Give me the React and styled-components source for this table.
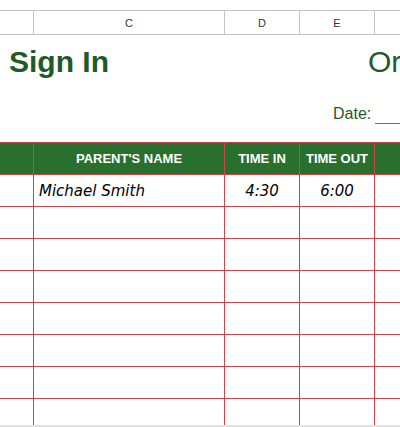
import React from "react";
import styled, { createGlobalStyle } from "styled-components";

const GlobalStyle = createGlobalStyle`
  html, body {
    margin: 0;
    padding: 0;
    background: #fff;
    overflow: hidden;
  }
  * {
    box-sizing: border-box;
  }
`;

const COLS = "33px 191px 75px 75px 1fr";
const GRID_GRAY = "#c4c4c4";
const RED = "#c9474c";
const GREEN = "#29702f";
const INK = "#1f5a2b";

const rows = [
  { name: "Michael Smith", timeIn: "4:30", timeOut: "6:00" },
  {},
  {},
  {},
  {},
  {},
  {},
  {},
];

const App = () => {
  return (
    <Sheet>
      <GlobalStyle />
      <ColumnBar>
        <ColLetter />
        <ColLetter>C</ColLetter>
        <ColLetter>D</ColLetter>
        <ColLetter>E</ColLetter>
        <ColLetter />
      </ColumnBar>

      <TitleBlock>
        <TitleRow>
          <Title bold>Sign In</Title>
          <Title>Or</Title>
        </TitleRow>
        <DateRow>
          <DateLabel>Date:</DateLabel>
          <DateBlank />
        </DateRow>
      </TitleBlock>

      <Table>
        <HeadRow>
          <HeadCell />
          <HeadCell>PARENT'S NAME</HeadCell>
          <HeadCell>TIME IN</HeadCell>
          <HeadCell>TIME OUT</HeadCell>
          <HeadCell />
        </HeadRow>
        {rows.map((r, i) => (
          <Row key={i}>
            <Cell />
            <Cell align="left">{r.name}</Cell>
            <Cell>{r.timeIn}</Cell>
            <Cell>{r.timeOut}</Cell>
            <Cell />
          </Row>
        ))}
      </Table>
      <ScrollEdge />
    </Sheet>
  );
};

const Sheet = styled.div`
  width: 400px;
  height: 427px;
  display: flex;
  flex-direction: column;
  overflow: hidden;
  font-family: "Liberation Sans", Arial, sans-serif;
`;

const ColumnBar = styled.div`
  margin-top: 10px;
  height: 25px;
  flex-shrink: 0;
  display: grid;
  grid-template-columns: ${COLS};
  border-top: 1px solid ${GRID_GRAY};
  border-bottom: 1px solid ${GRID_GRAY};
`;

const ColLetter = styled.div`
  display: flex;
  align-items: center;
  justify-content: center;
  font-size: 11px;
  color: #333;
  & + & {
    border-left: 1px solid ${GRID_GRAY};
  }
`;

const TitleBlock = styled.div`
  height: 107px;
  flex-shrink: 0;
  display: flex;
  flex-direction: column;
`;

const TitleRow = styled.div`
  display: grid;
  grid-template-columns: 368px max-content;
  padding-top: 10px;
  white-space: nowrap;
`;

const Title = styled.div`
  font-size: 30px;
  line-height: 34px;
  color: ${INK};
  font-weight: ${(p) => (p.bold ? 700 : 400)};
  padding-left: ${(p) => (p.bold ? "9px" : "0")};
`;

const DateRow = styled.div`
  margin-top: 25px;
  padding-left: 333px;
  display: flex;
  align-items: flex-end;
  gap: 4px;
`;

const DateLabel = styled.span`
  font-size: 16px;
  line-height: 19px;
  color: ${INK};
`;

const DateBlank = styled.span`
  flex: 1;
  height: 19px;
  margin-bottom: -1px;
  border-bottom: 1px solid ${RED};
`;

const Table = styled.div`
  flex: 1;
  overflow: hidden;
  border-top: 1px solid ${RED};
`;

const Row = styled.div`
  height: 32px;
  display: grid;
  grid-template-columns: ${COLS};
  border-bottom: 1px solid ${RED};
`;

const HeadRow = styled(Row)`
  background: ${GREEN};
`;

const Cell = styled.div`
  display: flex;
  align-items: center;
  justify-content: ${(p) => (p.align === "left" ? "flex-start" : "center")};
  padding: 0 5px;
  font-family: "DejaVu Sans", sans-serif;
  font-style: italic;
  font-size: 15px;
  color: #000;
  white-space: nowrap;
  & + & {
    border-left: 1px solid ${RED};
  }
`;

const HeadCell = styled.div`
  display: flex;
  align-items: center;
  justify-content: center;
  font-size: 13px;
  font-weight: 700;
  color: #fff;
  white-space: nowrap;
  & + & {
    border-left: 1px solid ${RED};
  }
`;

const ScrollEdge = styled.div`
  height: 2px;
  flex-shrink: 0;
  background: #e3e3e3;
`;

export default App;
